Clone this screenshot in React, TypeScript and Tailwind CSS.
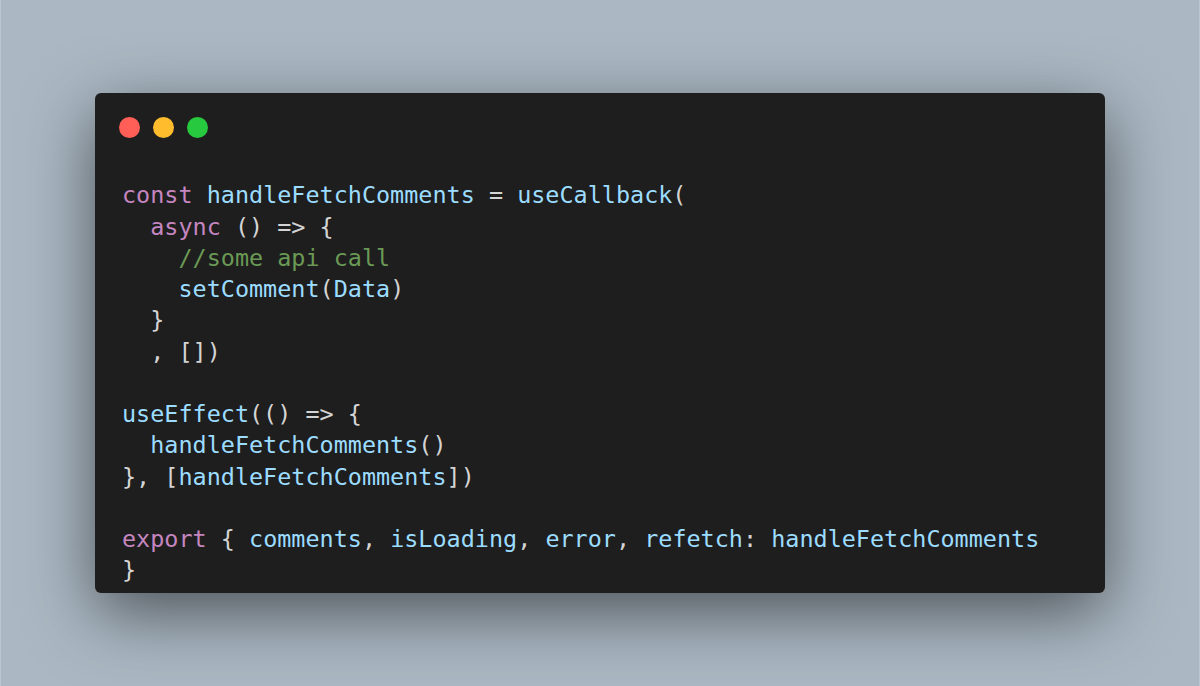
const kw = "text-[#c586c0]";
const id = "text-[#9cdcfe]";
const cm = "text-[#6a9955]";
const pn = "text-[#d4d4d4]";

type Token = [string, string];

const lines: Token[][] = [
	[[kw, "const"], [pn, " "], [id, "handleFetchComments"], [pn, " = "], [id, "useCallback"], [pn, "("]],
	[[pn, "  "], [kw, "async"], [pn, " () => {"]],
	[[pn, "    "], [cm, "//some api call"]],
	[[pn, "    "], [id, "setComment"], [pn, "("], [id, "Data"], [pn, ")"]],
	[[pn, "  }"]],
	[[pn, "  , [])"]],
	[],
	[[id, "useEffect"], [pn, "(() => {"]],
	[[pn, "  "], [id, "handleFetchComments"], [pn, "()"]],
	[[pn, "}, ["], [id, "handleFetchComments"], [pn, "])"]],
	[],
	[[kw, "export"], [pn, " { "], [id, "comments"], [pn, ", "], [id, "isLoading"], [pn, ", "], [id, "error"], [pn, ", "], [id, "refetch"], [pn, ": "], [id, "handleFetchComments"]],
	[[pn, "}"]],
];

const App = () => {
	return (
		<div className="w-[1200px] h-[686px] flex items-center justify-center bg-[#abb8c3] border-l border-r border-[#bcc6cf]">
			<div className="w-[1010px] rounded-[6px] bg-[#1e1e1e] shadow-[0_20px_68px_rgba(0,0,0,0.55)] pt-[24px] pb-[6px] pl-[27px] pr-[20px]">
				<div className="flex flex-row items-center gap-[13px] -ml-[3px]">
					<span className="w-[21px] h-[21px] rounded-full bg-[#ff5f56]" />
					<span className="w-[21px] h-[21px] rounded-full bg-[#ffbd2e]" />
					<span className="w-[21px] h-[21px] rounded-full bg-[#27c93f]" />
				</div>
				<pre className="mt-[42px] font-['DejaVu_Sans_Mono',monospace] text-[23.45px] leading-[31.25px] whitespace-pre">
					{lines.map((line, i) => (
						<div key={i} className="h-[31.25px]">
							{line.map(([cls, text], j) => (
								<span key={j} className={cls}>
									{text}
								</span>
							))}
						</div>
					))}
				</pre>
			</div>
		</div>
	);
};

export default App;
